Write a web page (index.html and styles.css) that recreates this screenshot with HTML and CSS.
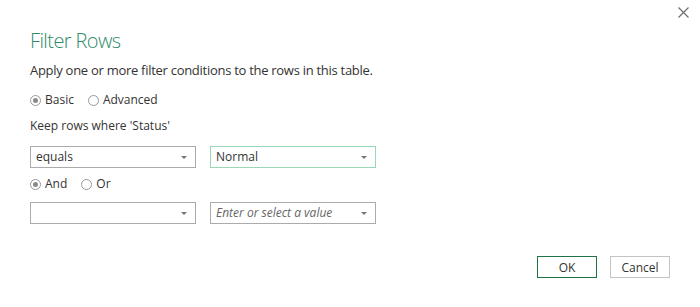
FILE: index.html
```html
<!DOCTYPE html>
<html lang="en">
<head>
    <meta charset="UTF-8">
    <title>Filter Rows</title>
    <link rel="stylesheet" href="styles.css">
</head>
<body>
    <div class="dialog">
        <button class="close" aria-label="Close">
            <svg width="11" height="11" viewBox="0 0 11 11"><path d="M0.5 0.5L10.5 10.5M10.5 0.5L0.5 10.5" stroke="#6e6e6e" stroke-width="1.2"/></svg>
        </button>
        <h1>Filter Rows</h1>
        <p class="intro">Apply one or more filter conditions to the rows in this table.</p>
        <div class="radios">
            <label><span class="radio checked"></span>Basic</label>
            <label><span class="radio"></span>Advanced</label>
        </div>
        <p class="keep">Keep rows where 'Status'</p>
        <div class="row">
            <div class="select">equals<span class="arrow"></span></div>
            <div class="select focus">Normal<span class="arrow"></span></div>
        </div>
        <div class="radios and-or">
            <label><span class="radio checked"></span>And</label>
            <label><span class="radio"></span>Or</label>
        </div>
        <div class="row">
            <div class="select"><span class="arrow"></span></div>
            <div class="select"><span class="placeholder">Enter or select a value</span><span class="arrow"></span></div>
        </div>
        <div class="buttons">
            <button class="ok">OK</button>
            <button class="cancel">Cancel</button>
        </div>
    </div>
</body>
</html>
```

FILE: styles.css
```css
body {
    margin: 0;
    background: #fff;
    color: #333;
    font-family: "Open Sans", "Noto Sans", sans-serif;
    font-size: 12px;
}
.dialog {
    position: relative;
    width: 700px;
    height: 307px;
    padding: 29px 30px 0;
    box-sizing: border-box;
}
.close {
    position: absolute;
    top: 7px;
    right: 11px;
    border: none;
    background: none;
    padding: 0;
    width: 11px;
    height: 11px;
    display: flex;
}
h1 {
    margin: 0;
    font-size: 20px;
    font-weight: 300;
    color: #2f8a67;
    line-height: 24px;
    letter-spacing: -0.6px;
}
.intro {
    margin: 8px 0 0;
    font-size: 13px;
    line-height: 18px;
    letter-spacing: -0.28px;
}
.radios {
    display: flex;
    gap: 14px;
    margin-top: 13px;
    line-height: 16px;
}
.radios label {
    display: flex;
    align-items: center;
    gap: 4px;
}
.radio {
    width: 9px;
    height: 9px;
    border: 1px solid #999;
    border-radius: 50%;
    box-sizing: content-box;
    display: inline-block;
    position: relative;
}
.radio.checked::after {
    content: "";
    position: absolute;
    left: 2px;
    top: 2px;
    width: 5px;
    height: 5px;
    border-radius: 50%;
    background: #8a8a8a;
}
.keep {
    margin: 10px 0 0;
    line-height: 16px;
}
.row {
    display: flex;
    gap: 14px;
    margin-top: 12px;
}
.select {
    position: relative;
    width: 166px;
    height: 22px;
    box-sizing: border-box;
    border: 1px solid #ababab;
    padding-left: 5px;
    line-height: 20px;
}
.select.focus {
    border-color: #9ad7b6;
}
.arrow {
    position: absolute;
    right: 8px;
    top: 9px;
    border-left: 3px solid transparent;
    border-right: 3px solid transparent;
    border-top: 3px solid #777;
}
.placeholder {
    font-style: italic;
    color: #666;
}
.and-or {
    margin-top: 8px;
}
.and-or + .row {
    margin-top: 10px;
}
.buttons {
    display: flex;
    justify-content: flex-end;
    gap: 13px;
    margin-top: 32px;
}
.buttons button {
    width: 60px;
    height: 22px;
    background: #fff;
    font-family: inherit;
    font-size: 12px;
    color: #333;
    padding: 0;
}
.ok {
    border: 1px solid #217346;
}
.cancel {
    border: 1px solid #c4c4c4;
}
```
